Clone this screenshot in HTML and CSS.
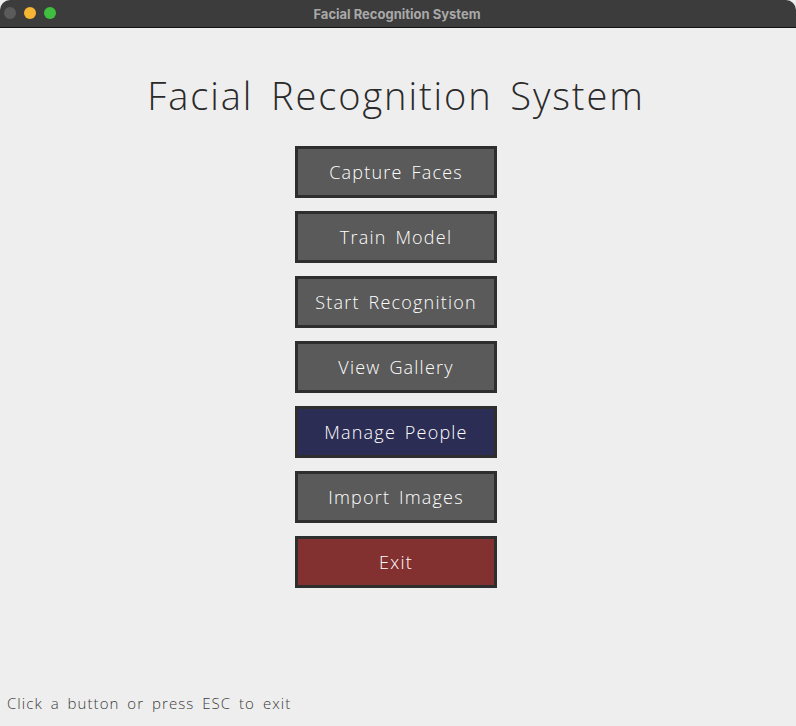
FILE: index.html
```html
<!DOCTYPE html>
<html>
<head>
<meta charset="utf-8">
<link rel="stylesheet" href="styles.css">
</head>
<body>
<div class="window">
  <div class="titlebar">
    <div class="lights">
      <span class="light gray"></span>
      <span class="light yellow"></span>
      <span class="light green"></span>
    </div>
    <div class="wintitle">Facial Recognition System</div>
  </div>
  <div class="content">
    <h1 class="heading">Facial Recognition System</h1>
    <div class="menu">
      <div class="btn">Capture Faces</div>
      <div class="btn">Train Model</div>
      <div class="btn">Start Recognition</div>
      <div class="btn">View Gallery</div>
      <div class="btn btn-blue">Manage People</div>
      <div class="btn">Import Images</div>
      <div class="btn btn-red">Exit</div>
    </div>
    <div class="footer">Click a button or press ESC to exit</div>
  </div>
</div>
</body>
</html>
```
FILE: styles.css
```css
html, body {
  margin: 0;
  padding: 0;
  width: 796px;
  height: 726px;
  overflow: hidden;
  background: #eeeeee;
}
.window {
  display: flex;
  flex-direction: column;
  height: 726px;
}
.titlebar {
  position: relative;
  height: 27px;
  background: #3c3c3c;
  border-bottom: 1px solid #111;
  border-radius: 10px 10px 0 0;
  display: flex;
  align-items: center;
  justify-content: center;
}
.lights {
  position: absolute;
  left: 4px;
  top: 7px;
  display: flex;
  gap: 8px;
}
.light {
  width: 12px;
  height: 12px;
  border-radius: 50%;
  display: block;
}
.gray { background: #5b5b5b; }
.yellow { background: #f7b534; }
.green { background: #3fbe3f; }
.wintitle {
  font-family: "Inter", "Liberation Sans", sans-serif;
  font-weight: 700;
  font-size: 13px;
  color: #a9a9a9;
  margin-left: -2px;
}
.content {
  flex: 1;
  display: flex;
  flex-direction: column;
  align-items: flex-start;
  font-family: "Open Sans", "DejaVu Sans", sans-serif;
  font-weight: 300;
}
.heading {
  align-self: center;
  margin: 44px 0 0 -4px;
  font-weight: 300;
  font-size: 38px;
  line-height: 46px;
  letter-spacing: 1.9px;
  word-spacing: 6px;
  color: #2a2a2a;
  height: 46px;
}
.menu {
  margin-top: 28px;
  margin-left: 295px;
  display: flex;
  flex-direction: column;
  gap: 13px;
}
.btn {
  box-sizing: border-box;
  width: 202px;
  height: 52px;
  background: #5a5a5a;
  border: 3px solid #2e2e2e;
  color: #ffffff;
  font-size: 18px;
  letter-spacing: 1.2px;
  word-spacing: 3px;
  display: flex;
  align-items: center;
  justify-content: center;
}
.btn-blue { background: #2c2d54; }
.btn-red { background: #833130; }
.footer {
  margin-top: auto;
  margin-bottom: 13px;
  margin-left: 7px;
  font-size: 15px;
  letter-spacing: 1.05px;
  word-spacing: 3px;
  color: #3a3a3a;
}
```
